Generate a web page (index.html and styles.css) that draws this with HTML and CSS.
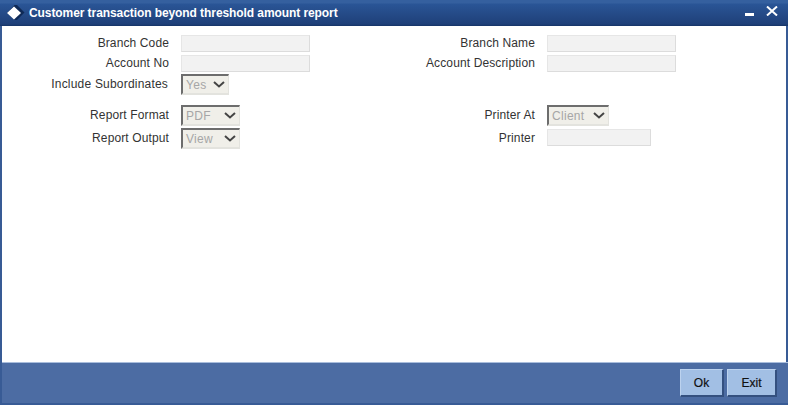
FILE: index.html
```html
<!DOCTYPE html>
<html lang="en">
<head>
<meta charset="utf-8">
<title>Customer transaction beyond threshold amount report</title>
<link rel="stylesheet" href="styles.css">
</head>
<body>
<div class="window">
  <header class="titlebar">
    <svg class="logo" width="18" height="16" viewBox="0 0 18 16"><path d="M7.500 0 10 0 17.500 7.500 10 15 7.500 15 0 8Z" fill="#0f2a57"/><path d="M7 1.500 14 8 7 14.500 0 8Z" fill="#fff"/></svg>
    <h1 class="title">Customer transaction beyond threshold amount report</h1>
    <div class="controls">
      <svg class="min" width="9" height="3" viewBox="0 0 9 3"><rect width="9" height="3" fill="#fff"/></svg>
      <svg class="close" width="12" height="10" viewBox="0 0 12 10"><path d="M1 0.500 11 9.500M11 0.500 1 9.500" stroke="#fff" stroke-width="2" fill="none"/></svg>
    </div>
  </header>
  <main class="content">
    <form class="form">
      <label class="lbl">Branch Code</label><div class="input w129"></div>
      <label class="lbl">Branch Name</label><div class="input w129"></div>

      <label class="lbl">Account No</label><div class="input w129"></div>
      <label class="lbl">Account Description</label><div class="input w129"></div>

      <label class="lbl sub">Include Subordinates</label>
      <div class="select w48"><span>Yes</span><svg width="12" height="7" viewBox="0 0 12 7"><path d="M1 1 6 5.500 11 1" stroke="#444" stroke-width="2" fill="none"/></svg></div>
      <span class="empty"></span><span class="empty"></span>

      <label class="lbl low">Report Format</label>
      <div class="select w59"><span>PDF</span><svg width="12" height="7" viewBox="0 0 12 7"><path d="M1 1 6 5.500 11 1" stroke="#444" stroke-width="2" fill="none"/></svg></div>
      <label class="lbl low">Printer At</label>
      <div class="select w62"><span>Client</span><svg width="12" height="7" viewBox="0 0 12 7"><path d="M1 1 6 5.500 11 1" stroke="#444" stroke-width="2" fill="none"/></svg></div>

      <label class="lbl low">Report Output</label>
      <div class="select w59"><span>View</span><svg width="12" height="7" viewBox="0 0 12 7"><path d="M1 1 6 5.500 11 1" stroke="#444" stroke-width="2" fill="none"/></svg></div>
      <label class="lbl low">Printer</label><div class="input w104 nudge"></div>
    </form>
  </main>
  <footer class="footer">
    <button class="btn" type="button">Ok</button>
    <button class="btn" type="button">Exit</button>
  </footer>
</div>
</body>
</html>
```
FILE: styles.css
```css
* { box-sizing: border-box; }
html, body { margin: 0; padding: 0; }
body { width: 788px; height: 405px; overflow: hidden; font-family: "Liberation Sans", Arial, sans-serif; font-size: 12px; color: #333; background: #fff; }
.window { width: 788px; height: 405px; display: flex; flex-direction: column; background: #385b95; }
.titlebar { height: 26px; flex: none; display: flex; align-items: center; padding: 0 7px; background: linear-gradient(#35609f 0, #35609f 3px, #2a5596 4px, #1f4079 24px, #163467 26px); }
.logo { flex: none; margin-right: 4px; }
.title { margin: 0; font-size: 12px; font-weight: bold; color: #fff; flex: 1; letter-spacing: -0.08px; }
.controls { display: flex; align-items: flex-start; gap: 12px; height: 26px; margin-right: 3px; }
.min { margin-top: 13px; }
.close { margin-top: 6px; }
.content { flex: 1; margin: 0 2px; background: #fff; padding-top: 9px; }
.form { display: grid; grid-template-columns: 167px 226px 116px auto; grid-template-rows: 20px 19px 31px 23px 21px; column-gap: 12px; align-items: start; }
.lbl { text-align: right; line-height: 17px; white-space: nowrap; display: block; letter-spacing: 0.12px; }
.sub { margin-right: 1px; line-height: 20px; letter-spacing: 0.2px; }
.low { line-height: 21px; }
.input { height: 17px; background: #f2f2f2; border: 1px solid #e6e6e6; border-right-color: #dcdcdc; border-bottom-color: #dcdcdc; }
.nudge { margin-top: 1px; }
.w129 { width: 129px; }
.w104 { width: 104px; }
.w48 { width: 48px; }
.w59 { width: 59px; }
.w62 { width: 62px; }
.select { height: 21px; display: flex; align-items: center; justify-content: space-between; padding: 0 3px 0 3px; background: #f0efe9; border-style: solid; border-width: 2px 1px 2px 2px; border-color: #6d6d6d #e3e3de #e3e3de #6d6d6d; color: #a6a6a6; letter-spacing: 0.3px; }
.footer { height: 43px; flex: none; margin: 0 0 0 2px; display: flex; justify-content: flex-end; gap: 3px; padding: 6px 11px 0 0; background: #4c6ca3; border-top: 1px solid #a9bddc; border-bottom: 2px solid #385b95; }
.btn { width: 44px; height: 28px; padding: 0; font: 12px "Liberation Sans", Arial, sans-serif; color: #111; -webkit-text-stroke: 0.2px #111; background: #a2bfe4; border-style: solid; border-width: 1px 2px 2px 1px; border-color: #bcd2ee #34507f #34507f #bcd2ee; }
.btn:last-child { width: 50px; }
```
